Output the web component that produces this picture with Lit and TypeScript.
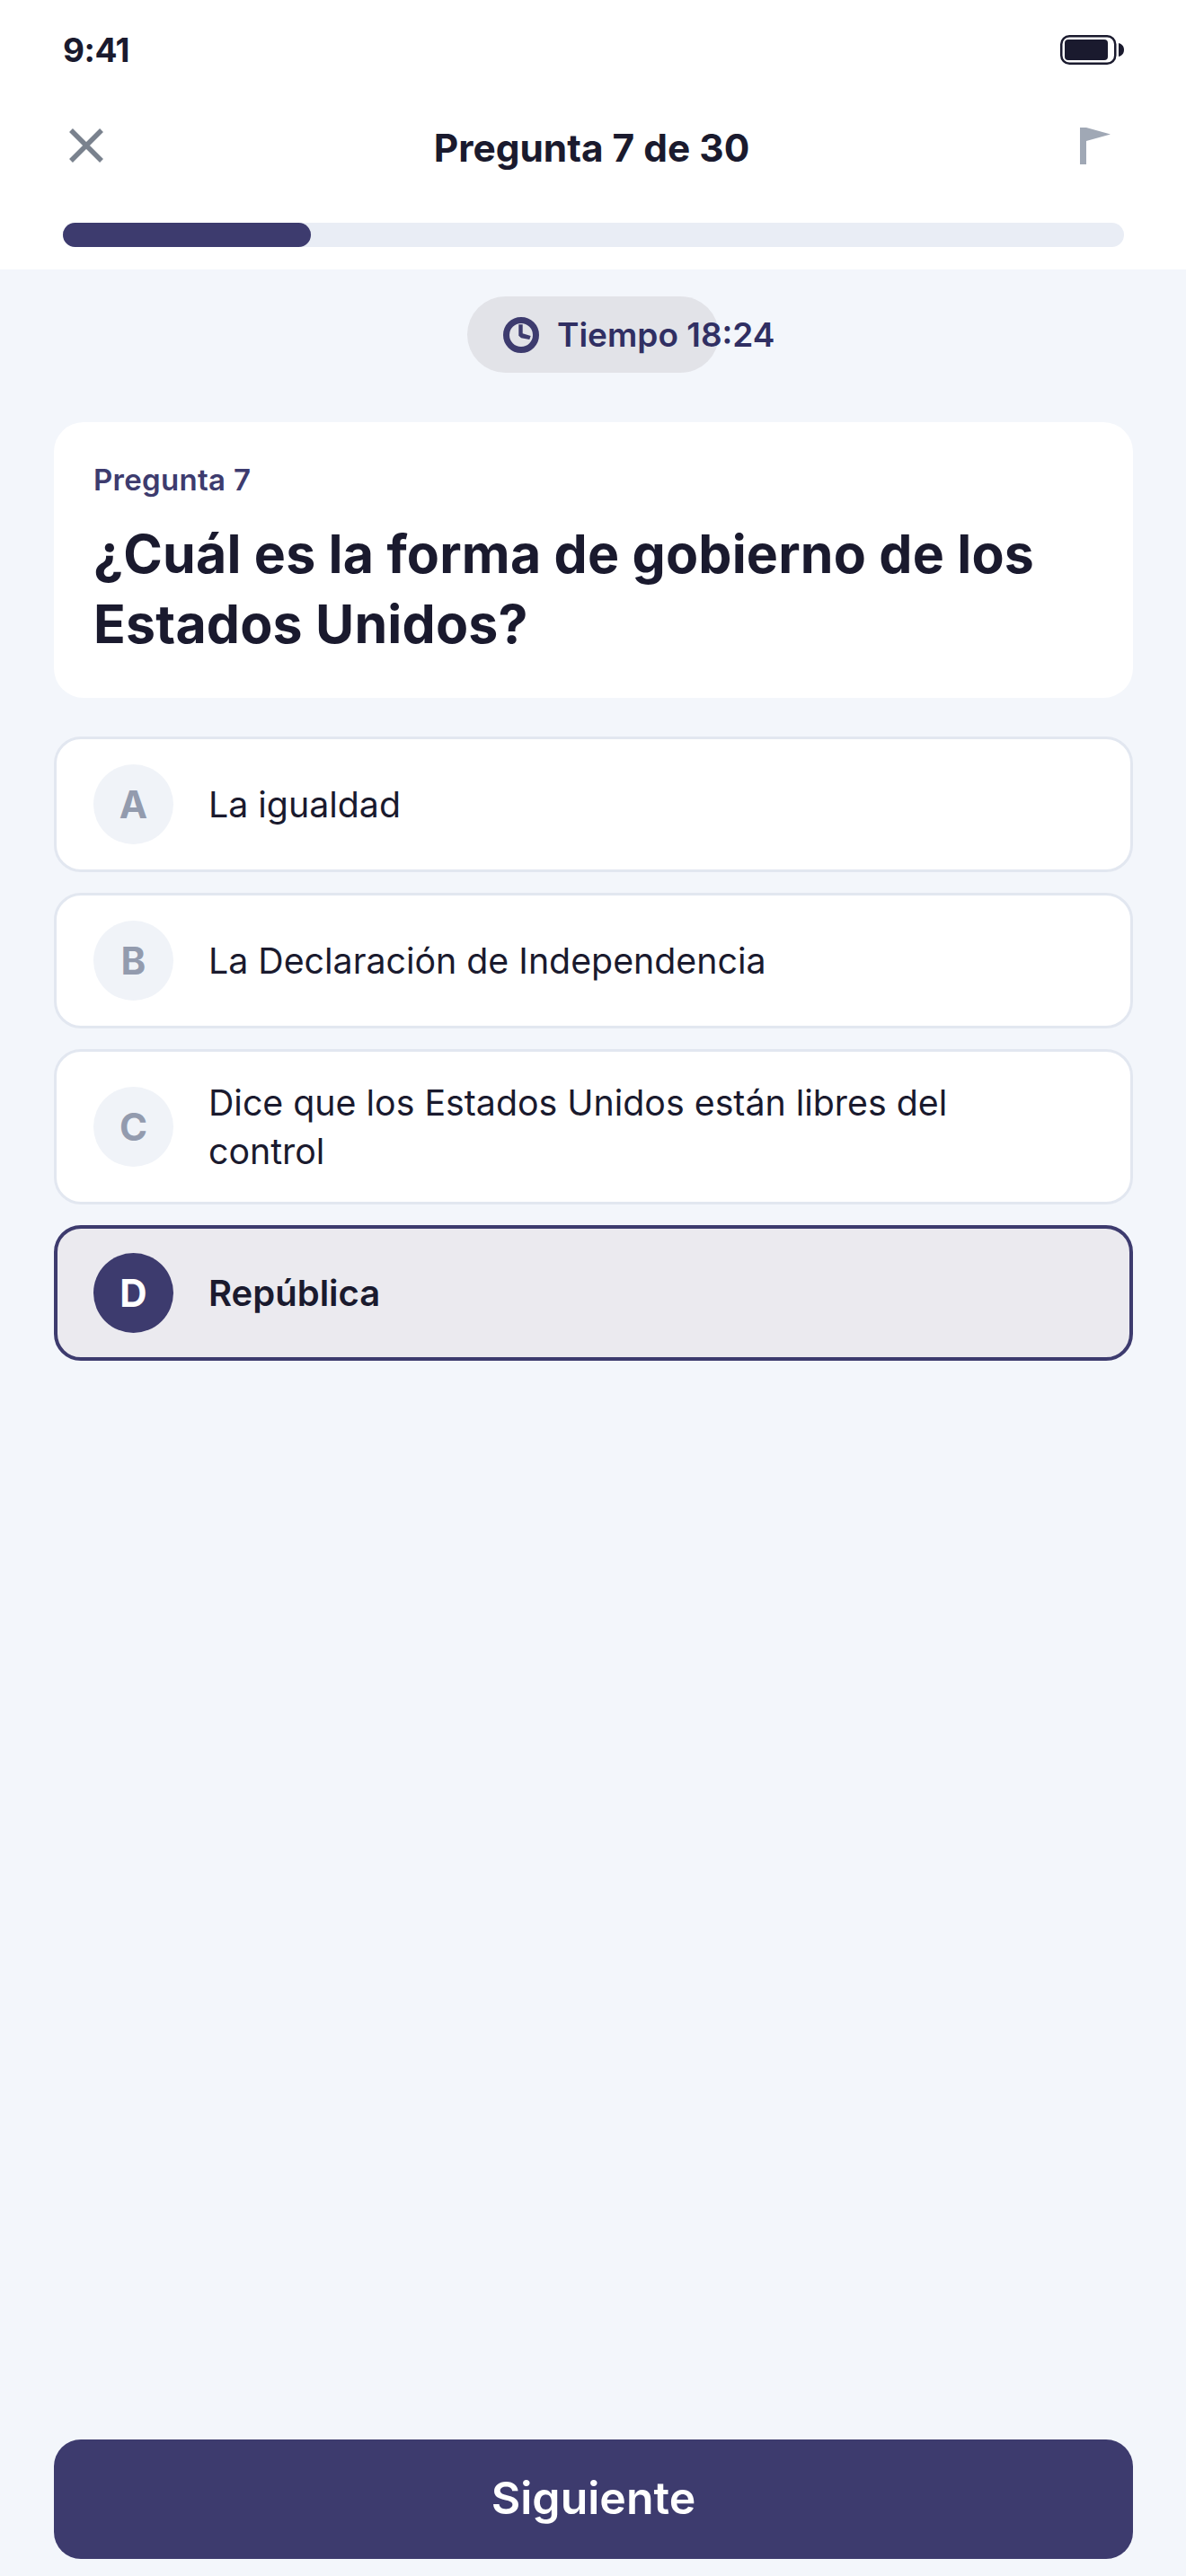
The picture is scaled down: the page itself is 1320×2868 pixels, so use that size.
import { LitElement, css, html, svg } from "lit";
import { customElement } from "lit/decorators.js";
import { classMap } from "lit/directives/class-map.js";

interface Option {
  letter: string;
  text: string;
  selected?: boolean;
}

const OPTIONS: Option[] = [
  { letter: "A", text: "La igualdad" },
  { letter: "B", text: "La Declaración de Independencia" },
  { letter: "C", text: "Dice que los Estados Unidos están libres del control" },
  { letter: "D", text: "República", selected: true },
];

const closeIcon = svg`<path d="M2 2 36 36M36 2 2 36" fill="none" stroke="#7a828e" stroke-width="5.500" />`;
const flagIcon = svg`<path d="M0 0H7L34 7.500 7 15V41H0Z" fill="#a0a8b5" />`;
const clockIcon = svg`
  <circle cx="20" cy="20" r="16.5" fill="none" stroke="#3d3b6e" stroke-width="7" />
  <path d="M17.300 8.300H21.700V18.300L30.700 21 29.300 25 20 23.300 17.300 20.700Z" fill="#3d3b6e" />`;
const batteryIcon = svg`
  <rect x="1.250" y="1.250" width="60" height="30.500" rx="9" fill="none" stroke="#1a1a2e" stroke-width="2.500" />
  <rect x="5" y="5" width="48" height="23" rx="4" fill="#1a1a2e" />
  <path d="M65 9C69 10 71 13 71 16.500S69 23 65 24Z" fill="#1a1a2e" />`;

@customElement("app-root")
export class AppRoot extends LitElement {
  static override styles = css`
    :host {
      display: flex;
      flex-direction: column;
      min-height: 2868px;
      background: #f3f6fb;
      color: #1a1a2e;
      font-family: Inter, "Liberation Sans", sans-serif;
    }

    svg {
      display: block;
      flex: none;
    }

    .top {
      background: #ffffff;
      padding: 0 69px 0 70px;
      height: 300px;
      box-sizing: border-box;
    }

    .status {
      display: flex;
      justify-content: space-between;
      align-items: center;
      height: 110px;
      font-size: 37px;
      font-weight: 700;
      letter-spacing: -0.5px;
    }

    .nav {
      display: flex;
      justify-content: space-between;
      align-items: center;
      height: 104px;
      padding: 0 15px 0 7px;
    }

    .nav h1 {
      margin: 0;
      padding-top: 4px;
      font-size: 42.4px;
      font-weight: 700;
    }

    .track {
      height: 27px;
      margin-top: 34px;
      border-radius: 14px;
      background: #e9edf5;
    }

    .fill {
      height: 100%;
      border-radius: 14px;
      background: #3d3b6e;
    }

    .timer-row {
      display: flex;
      justify-content: center;
      padding-top: 30px;
    }

    .timer {
      display: flex;
      align-items: center;
      gap: 20px;
      box-sizing: border-box;
      width: 280px;
      height: 85px;
      padding-left: 40px;
      border-radius: 43px;
      background: #e2e3e8;
      color: #302f63;
      font-size: 37px;
      font-weight: 600;
      white-space: nowrap;
    }

    main {
      flex: 1;
      display: flex;
      flex-direction: column;
      padding: 55px 59px 19px 60px;
    }

    .question {
      padding: 45px 44px 43px;
      border-radius: 33px;
      background: #ffffff;
    }

    .question .label {
      font-size: 33px;
      line-height: 38px;
      font-weight: 600;
      letter-spacing: 0.3px;
      color: #3d3b6e;
    }

    .question h2 {
      margin: 25px 0 0;
      font-size: 59px;
      line-height: 78px;
      font-weight: 700;
      letter-spacing: 0.2px;
    }

    .options {
      display: flex;
      flex-direction: column;
      gap: 23px;
      margin-top: 43px;
    }

    .option {
      display: flex;
      align-items: center;
      gap: 39px;
      box-sizing: border-box;
      min-height: 151px;
      padding: 28px 80px 28px 41px;
      border: 3px solid #e2e7f0;
      border-radius: 30px;
      background: #ffffff;
      font-size: 39.3px;
      line-height: 54px;
      font-weight: 400;
    }

    .option-text {
      padding: 1.5px 0;
    }

    .badge {
      flex: none;
      display: flex;
      align-items: center;
      justify-content: center;
      width: 89px;
      height: 89px;
      border-radius: 50%;
      background: #f0f3f8;
      color: #939bae;
      font-size: 42px;
      font-weight: 700;
    }

    .option.selected {
      border: 4px solid #3d3b6e;
      padding: 27px 80px 27px 40px;
      background: #ebeaef;
      font-size: 40px;
      font-weight: 600;
    }

    .option.selected .badge {
      background: #3d3b6e;
      color: #ffffff;
    }

    .next {
      display: block;
      width: 100%;
      height: 133px;
      margin-top: auto;
      padding: 0 0 3px;
      border: none;
      border-radius: 30px;
      background: #3d3b6e;
      color: #ffffff;
      font: 600 50px Inter, "Liberation Sans", sans-serif;
    }
  `;

  private renderOption(option: Option) {
    return html`
      <div class=${classMap({ option: true, selected: !!option.selected })}>
        <span class="badge">${option.letter}</span>
        <span class="option-text">${option.text}</span>
      </div>
    `;
  }

  override render() {
    return html`
      <header class="top">
        <div class="status">
          <span>9:41</span>
          <svg width="71" height="33" viewBox="0 0 71 33">${batteryIcon}</svg>
        </div>
        <div class="nav">
          <svg width="38" height="38" viewBox="0 0 38 38">${closeIcon}</svg>
          <h1>Pregunta 7 de 30</h1>
          <svg width="34" height="41" viewBox="0 0 34 41">${flagIcon}</svg>
        </div>
        <div class="track"><div class="fill" style="width: ${(7 / 30) * 100}%"></div></div>
      </header>
      <div class="timer-row">
        <div class="timer">
          <svg width="40" height="40" viewBox="0 0 40 40">${clockIcon}</svg>
          <span>Tiempo 18:24</span>
        </div>
      </div>
      <main>
        <section class="question">
          <div class="label">Pregunta 7</div>
          <h2>¿Cuál es la forma de gobierno de los Estados Unidos?</h2>
        </section>
        <div class="options">${OPTIONS.map((o) => this.renderOption(o))}</div>
        <button class="next">Siguiente</button>
      </main>
    `;
  }
}
